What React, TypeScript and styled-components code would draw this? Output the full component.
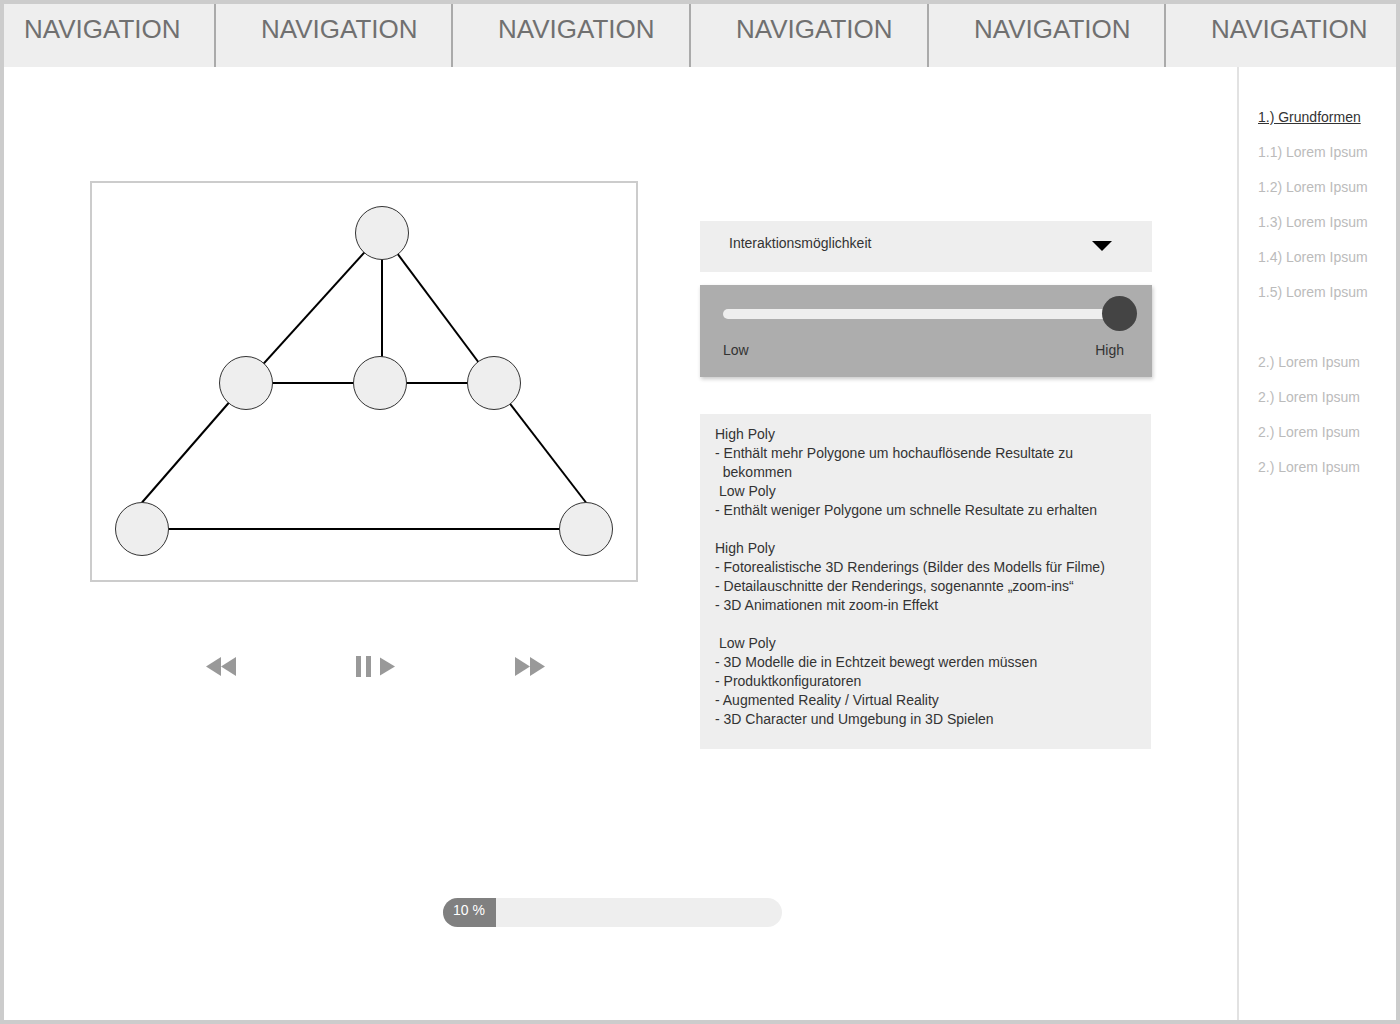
import styled, { createGlobalStyle } from 'styled-components';

// ==========================================
// Global
// ==========================================

const GlobalStyle = createGlobalStyle`
  html, body {
    margin: 0;
    padding: 0;
    background: #ffffff;
  }
  body {
    font-family: "Liberation Sans", Arial, Helvetica, sans-serif;
    color: #333333;
  }
  * { box-sizing: border-box; }
`;

// ==========================================
// Frame + navigation
// ==========================================

const Frame = styled.div`
  width: 1400px;
  height: 1024px;
  border: 4px solid #cccccc;
  display: flex;
  flex-direction: column;
  overflow: hidden;
`;

const NavBar = styled.nav`
  height: 63px;
  flex-shrink: 0;
  display: flex;
  background: #eeeeee;
`;

const NavTab = styled.div<{ $width?: number; $first?: boolean }>`
  ${({ $width }) => ($width ? `width: ${$width}px; flex-shrink: 0;` : 'flex: 1;')}
  border-left: ${({ $first }) => ($first ? 'none' : '2px solid #aaaaaa')};
  padding: 10px 0 0 ${({ $first }) => ($first ? 20 : 45)}px;
  font-size: 26px;
  line-height: 30px;
  color: #707070;
  white-space: nowrap;
`;

const Body = styled.div`
  flex: 1;
  display: flex;
  min-height: 0;
`;

// ==========================================
// Main content
// ==========================================

const Main = styled.main`
  flex: 1;
  padding: 114px 0 0 86px;
  display: flex;
  flex-direction: column;
  align-items: flex-start;
`;

const TopRow = styled.div`
  display: flex;
  align-items: flex-start;
  gap: 62px;
`;

const LeftCol = styled.div`
  display: flex;
  flex-direction: column;
`;

const DiagramBox = styled.div`
  width: 548px;
  height: 401px;
  border: 2px solid #cccccc;
  background: #ffffff;
`;

const Controls = styled.div`
  margin-top: 74px;
  padding-left: 116px;
  display: flex;
  align-items: center;
  gap: 119px;
  height: 21px;
`;

const ControlButton = styled.button`
  border: none;
  background: none;
  padding: 0;
  display: flex;
  cursor: pointer;
`;

const RightCol = styled.div`
  margin-top: 40px;
  width: 452px;
  display: flex;
  flex-direction: column;
`;

const Dropdown = styled.div`
  height: 51px;
  background: #eeeeee;
  display: flex;
  justify-content: space-between;
  padding: 13px 40px 0 29px;
  font-size: 14px;
  line-height: 18px;
  color: #333333;
`;

const Caret = styled.span`
  width: 0;
  height: 0;
  margin-top: 7px;
  border-left: 10px solid transparent;
  border-right: 10px solid transparent;
  border-top: 10px solid #000000;
`;

const SliderPanel = styled.div`
  margin-top: 13px;
  height: 92px;
  background: #adadad;
  box-shadow: 1px 2px 4px rgba(0, 0, 0, 0.22);
  padding: 11px 15px 0 23px;
`;

const SliderRow = styled.div`
  display: flex;
  align-items: center;
  height: 35px;
`;

const Track = styled.div`
  flex: 1;
  height: 10px;
  border-radius: 5px;
  background: #eeeeee;
`;

const Thumb = styled.div`
  width: 35px;
  height: 35px;
  border-radius: 50%;
  background: #444444;
  margin-left: -17px;
  flex-shrink: 0;
`;

const SliderLabels = styled.div`
  margin-top: 10px;
  padding-right: 13px;
  display: flex;
  justify-content: space-between;
  font-size: 14px;
  line-height: 19px;
  color: #333333;
`;

const InfoBox = styled.div`
  margin-top: 37px;
  width: 451px;
  background: #eeeeee;
  padding: 11px 15px 20px 15px;
  font-size: 14px;
  line-height: 19px;
  color: #333333;
  white-space: pre;
`;

const ProgressTrack = styled.div`
  margin: 149px 0 0 353px;
  width: 339px;
  height: 29px;
  border-radius: 15px;
  background: #eeeeee;
  overflow: hidden;
  display: flex;
`;

const ProgressFill = styled.div<{ $width: number }>`
  width: ${({ $width }) => $width}px;
  background: #808080;
  color: #ffffff;
  font-size: 14px;
  line-height: 24px;
  padding-left: 10px;
  white-space: nowrap;
`;

// ==========================================
// Sidebar
// ==========================================

const Sidebar = styled.aside`
  width: 159px;
  flex-shrink: 0;
  border-left: 2px solid #e2e2e2;
  padding: 33px 0 0 19px;
`;

const SideItem = styled.a<{ $active?: boolean }>`
  display: block;
  font-size: 14px;
  line-height: 35px;
  white-space: nowrap;
  color: ${({ $active }) => ($active ? '#333333' : '#bbbbbb')};
  text-decoration: ${({ $active }) => ($active ? 'underline' : 'none')};
`;

const SideGap = styled.div`
  height: 35px;
`;

// ==========================================
// Drawings
// ==========================================

const R = 26.5;

const nodes = [
  { id: 'top', x: 290, y: 50 },
  { id: 'ml', x: 154, y: 200 },
  { id: 'c', x: 288, y: 200 },
  { id: 'mr', x: 402, y: 200 },
  { id: 'bl', x: 50, y: 346 },
  { id: 'br', x: 494, y: 346 },
];

// the lower slanted edges end at the top of the corner circles
const edges: { a: string; b: string; toTop?: boolean }[] = [
  { a: 'top', b: 'ml' },
  { a: 'top', b: 'mr' },
  { a: 'ml', b: 'c' },
  { a: 'c', b: 'mr' },
  { a: 'ml', b: 'bl', toTop: true },
  { a: 'mr', b: 'br', toTop: true },
  { a: 'bl', b: 'br' },
];

function PolyDiagram() {
  const pos = (id: string) => nodes.find((n) => n.id === id)!;
  return (
    <svg width="544" height="397" viewBox="0 0 544 397">
      {edges.map(({ a, b, toTop }) => {
        const p = pos(a);
        const q = pos(b);
        return (
          <line
            key={a + b}
            x1={p.x}
            y1={p.y}
            x2={q.x}
            y2={toTop ? q.y - R : q.y}
            stroke="#000"
            strokeWidth="2"
          />
        );
      })}
      <line x1="290" y1="50" x2="290" y2="200" stroke="#000" strokeWidth="2" />
      {nodes.map((n) => (
        <circle key={n.id} cx={n.x} cy={n.y} r={R} fill="#eeeeee" stroke="#333" strokeWidth="1" />
      ))}
    </svg>
  );
}

const RewindIcon = () => (
  <svg width="30" height="19" viewBox="0 0 30 19">
    <polygon points="15,0 0,9.5 15,19" fill="#999" />
    <polygon points="30,0 15,9.5 30,19" fill="#999" />
  </svg>
);

const PausePlayIcon = () => (
  <svg width="41" height="21" viewBox="0 0 41 21">
    <rect x="1" y="0" width="5" height="21" fill="#999" />
    <rect x="11" y="0" width="5" height="21" fill="#999" />
    <polygon points="25,1.5 40,10.5 25,19.5" fill="#999" />
  </svg>
);

const ForwardIcon = () => (
  <svg width="30" height="19" viewBox="0 0 30 19">
    <polygon points="0,0 15,9.5 0,19" fill="#999" />
    <polygon points="15,0 30,9.5 15,19" fill="#999" />
  </svg>
);

// ==========================================
// Data
// ==========================================

const navWidths = [210, 237, 238, 238, 237, 0];

const infoText = [
  'High Poly',
  '- Enthält mehr Polygone um hochauflösende Resultate zu',
  '  bekommen',
  ' Low Poly',
  '- Enthält weniger Polygone um schnelle Resultate zu erhalten',
  '',
  'High Poly',
  '- Fotorealistische 3D Renderings (Bilder des Modells für Filme)',
  '- Detailauschnitte der Renderings, sogenannte „zoom-ins“',
  '- 3D Animationen mit zoom-in Effekt',
  '',
  ' Low Poly',
  '- 3D Modelle die in Echtzeit bewegt werden müssen',
  '- Produktkonfiguratoren',
  '- Augmented Reality / Virtual Reality',
  '- 3D Character und Umgebung in 3D Spielen',
].join('\n');

const firstGroup = ['1.1) Lorem Ipsum', '1.2) Lorem Ipsum', '1.3) Lorem Ipsum', '1.4) Lorem Ipsum', '1.5) Lorem Ipsum'];
const secondGroup = ['2.) Lorem Ipsum', '2.) Lorem Ipsum', '2.) Lorem Ipsum', '2.) Lorem Ipsum'];

// ==========================================
// App
// ==========================================

export default function App() {
  return (
    <>
      <GlobalStyle />
      <Frame>
        <NavBar>
          {navWidths.map((w, i) => (
            <NavTab key={i} $width={w || undefined} $first={i === 0}>
              NAVIGATION
            </NavTab>
          ))}
        </NavBar>

        <Body>
          <Main>
            <TopRow>
              <LeftCol>
                <DiagramBox>
                  <PolyDiagram />
                </DiagramBox>
                <Controls>
                  <ControlButton aria-label="Zurück">
                    <RewindIcon />
                  </ControlButton>
                  <ControlButton aria-label="Pause / Play">
                    <PausePlayIcon />
                  </ControlButton>
                  <ControlButton aria-label="Vor">
                    <ForwardIcon />
                  </ControlButton>
                </Controls>
              </LeftCol>

              <RightCol>
                <Dropdown>
                  <span>Interaktionsmöglichkeit</span>
                  <Caret />
                </Dropdown>
                <SliderPanel>
                  <SliderRow>
                    <Track />
                    <Thumb />
                  </SliderRow>
                  <SliderLabels>
                    <span>Low</span>
                    <span>High</span>
                  </SliderLabels>
                </SliderPanel>
                <InfoBox>{infoText}</InfoBox>
              </RightCol>
            </TopRow>

            <ProgressTrack>
              <ProgressFill $width={53}>10 %</ProgressFill>
            </ProgressTrack>
          </Main>

          <Sidebar>
            <SideItem $active>1.) Grundformen</SideItem>
            {firstGroup.map((t) => (
              <SideItem key={t}>{t}</SideItem>
            ))}
            <SideGap />
            {secondGroup.map((t, i) => (
              <SideItem key={i}>{t}</SideItem>
            ))}
          </Sidebar>
        </Body>
      </Frame>
    </>
  );
}
